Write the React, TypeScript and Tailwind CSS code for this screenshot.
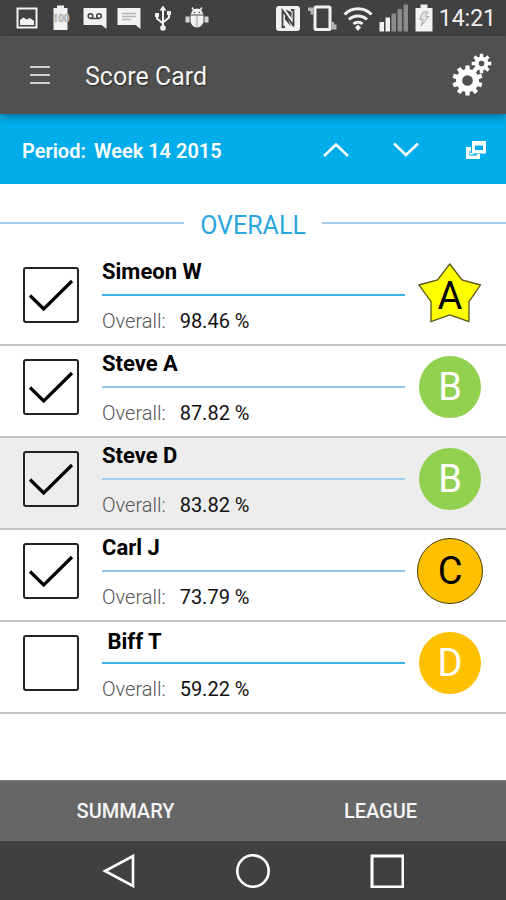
import { useState } from "react";
import type { ReactNode } from "react";

type Person = {
  name: string;
  score: string;
  grade: string;
  checked: boolean;
  rowClass: string;
  lineClass: string;
};

const people: Person[] = [
  {
    name: "Simeon W",
    score: "98.46 %",
    grade: "A",
    checked: true,
    rowClass: "bg-white",
    lineClass: "bg-[#3bb0e6]",
  },
  {
    name: "Steve A",
    score: "87.82 %",
    grade: "B",
    checked: true,
    rowClass: "bg-white",
    lineClass: "bg-[#93c9f1]",
  },
  {
    name: "Steve D",
    score: "83.82 %",
    grade: "B",
    checked: true,
    rowClass: "bg-[#ededed]",
    lineClass: "bg-[#a5cdec]",
  },
  {
    name: "Carl J",
    score: "73.79 %",
    grade: "C",
    checked: true,
    rowClass: "bg-white",
    lineClass: "bg-[#8cc6f0]",
  },
  {
    name: " Biff T",
    score: "59.22 %",
    grade: "D",
    checked: false,
    rowClass: "bg-white",
    lineClass: "bg-[#3bb0e6]",
  },
];

function gearPath(cx: number, cy: number, outer: number, inner: number, hole: number, teeth: number) {
  const step = (Math.PI * 2) / teeth;
  const points: string[] = [];
  for (let i = 0; i < teeth; i++) {
    const a = i * step - Math.PI / 2;
    const corners = [
      [inner, -0.32],
      [outer, -0.22],
      [outer, 0.22],
      [inner, 0.32],
    ];
    corners.forEach(([r, t]) => {
      points.push(`${cx + r * Math.cos(a + t * step)} ${cy + r * Math.sin(a + t * step)}`);
    });
  }
  return `M${points.join("L")}Z M${cx - hole} ${cy}a${hole} ${hole} 0 1 0 ${hole * 2} 0a${hole} ${hole} 0 1 0 ${-hole * 2} 0Z`;
}

function StatusIcon({ children }: { children: ReactNode }) {
  return (
    <svg width="24" height="28" viewBox="0 0 24 28" fill="#f2f2f2">
      {children}
    </svg>
  );
}

function StatusBar() {
  return (
    <div className="flex h-9 items-center justify-between bg-[#414141] pr-2.5 pl-[15px]">
      <div className="flex gap-2.5">
        <StatusIcon>
          <path d="M2.500 4.500h19v19h-19z" fill="none" stroke="#f2f2f2" strokeWidth="2" />
          <path d="M5 21v-5l3.500-2.500 3 2 3.500-1.500 4 3v4z" />
        </StatusIcon>
        <StatusIcon>
          <path d="M8 1.500h7v2.500h3.500v22h-14v-22h3.500z" />
          <text
            x="12"
            y="18"
            textAnchor="middle"
            fontSize="10"
            fontWeight="700"
            fontFamily="Roboto, sans-serif"
            fill="#c8c8c8"
            stroke="#a8a8a8"
            strokeWidth="0.500"
          >
            100
          </text>
        </StatusIcon>
        <StatusIcon>
          <path d="M0.500 4h23v21l-5-4h-18z" />
          <g fill="none" stroke="#414141" strokeWidth="1.500">
            <circle cx="7.500" cy="12" r="2.300" />
            <circle cx="16" cy="12" r="2.300" />
            <path d="M7.500 14.500h8.500" />
          </g>
        </StatusIcon>
        <StatusIcon>
          <path d="M0.500 4h23v21l-5-4h-18z" />
          <path d="M5 9.500h14M5 12.500h14M5 15.500h9" stroke="#b5b5b5" strokeWidth="1.500" />
        </StatusIcon>
        <StatusIcon>
          <path d="M12 1.500l3.500 5h-7zM4 9h4v4H4zM16 7h4v4h-4z" />
          <circle cx="12" cy="24" r="2.800" />
          <path
            d="M12 5v18M6 12v2.500l6 5M18 10v3.500l-6 5"
            fill="none"
            stroke="#f2f2f2"
            strokeWidth="2"
          />
        </StatusIcon>
        <StatusIcon>
          <path d="M6 10.500a6 6 0 0 1 12 0zM5.500 11.500h13v5.500a6.500 6.500 0 0 1-13 0z" />
          <path d="M0.500 12.500h4v6h-4zM19.500 12.500h4v6h-4z" fill="#d5d5d5" />
          <path d="M7 3.500l2 3M17 3.500l-2 3" stroke="#f2f2f2" strokeWidth="1.500" />
          <path d="M5 11h14M12 12v11" stroke="#999" />
          <circle cx="9.500" cy="8.500" r="0.800" fill="#414141" />
          <circle cx="14.500" cy="8.500" r="0.800" fill="#414141" />
        </StatusIcon>
      </div>

      <div className="flex items-center gap-1.5">
        <svg width="26" height="28" viewBox="0 0 26 28">
          <rect x="1" y="2" width="24" height="25" rx="3" fill="#f2f2f2" />
          <path
            d="M10 23H7.500V6.500L19 22.500M16 6h2.500v15"
            fill="none"
            stroke="#414141"
            strokeWidth="1.800"
          />
          <path d="M10 8v7.500l6 7z" fill="#414141" />
          <path d="M10.500 5.500l6 8.500V8z" fill="#414141" />
        </svg>
        <svg width="30" height="28" viewBox="0 0 30 28" fill="none" stroke="#f2f2f2">
          <rect x="8" y="3" width="15" height="22.500" rx="1" strokeWidth="3" />
          <path d="M1 3.500h5.500v7h-3V7H1zM24.500 18h2.500v2.500h2.500v5h-5z" fill="#b5b5b5" stroke="none" />
        </svg>
        <svg width="30" height="28" viewBox="0 0 30 28" fill="none" stroke="#f2f2f2">
          <path
            d="M1.500 10.500a19 19 0 0 1 27 0M6 15.500a13 13 0 0 1 18 0M10.500 20a6.500 6.500 0 0 1 9 0"
            strokeWidth="3"
          />
          <path d="M15 20.500l3 3-3 3.500-3-3.500z" fill="#f2f2f2" stroke="none" />
        </svg>
        <svg width="30" height="28" viewBox="0 0 30 28" fill="#8b8b8b">
          <path d="M0.500 18h4.500v9.500H0.500zM6.500 13.500h4.500v14H6.500z" fill="#f2f2f2" />
          <path d="M12.500 9.500h4.500v18h-4.500zM18.500 5h4.500v22.500h-4.500zM24.500 0.500h4.500v27h-4.500z" />
        </svg>
        <svg width="18" height="28" viewBox="0 0 18 28">
          <path d="M5.500 0.500h7v3.500h5v23.500H0.500V4h5z" fill="#f2f2f2" />
          <path
            d="M8 8h5l-2.500 4.500h3.500L6 22l2-6.500H4.500z"
            fill="#e2e2e2"
            stroke="#aaa"
            strokeWidth="1"
          />
        </svg>
        <span className="pt-0.5 text-[23px] leading-7 text-[#f0f0f0]">14:21</span>
      </div>
    </div>
  );
}

function Header() {
  return (
    <header className="relative z-10 flex h-[78px] items-center bg-[#505050] pr-3.5 pl-[30px] shadow-[0_3px_8px_rgba(0,0,0,0.35)]">
      <button aria-label="Menu" className="mr-[35px]">
        <svg width="20" height="20" viewBox="0 0 20 20" stroke="#cfcfcf" strokeWidth="2">
          <path d="M0 2h20M0 10h20M0 18h20" />
        </svg>
      </button>
      <h1 className="flex-1 pt-1 text-[25px] leading-8 text-[#f5f5f5] [text-shadow:1px_1px_1px_rgba(0,0,0,0.5)]">
        Score Card
      </h1>
      <button aria-label="Settings">
        <svg width="40" height="44" viewBox="0 0 40 44" fill="#fff" fillRule="evenodd">
          <path d={gearPath(15.5, 27.5, 15.2, 11.5, 5.3, 10)} />
          <path d={gearPath(29.5, 10.5, 10, 7, 2.8, 8)} />
        </svg>
      </button>
    </header>
  );
}

function PeriodBar() {
  return (
    <div className="flex h-[70px] items-center bg-[#00adea] pr-5 pl-[22px] text-white">
      <p className="flex flex-1 gap-2 pt-1 text-xl leading-7 font-semibold">
        <span>Period:</span>
        <span>Week 14 2015</span>
      </p>
      <button aria-label="Previous week" className="mr-11">
        <svg width="26" height="16" viewBox="0 0 26 16" fill="none" stroke="#fff" strokeWidth="2.500">
          <path d="M1 15L13 3.500 25 15" />
        </svg>
      </button>
      <button aria-label="Next week" className="mr-[47px]">
        <svg width="26" height="16" viewBox="0 0 26 16" fill="none" stroke="#fff" strokeWidth="2.500">
          <path d="M1 2.500L13 14 25 2.500" />
        </svg>
      </button>
      <button aria-label="Choose period">
        <svg width="20" height="20" viewBox="0 0 20 20" fillRule="evenodd" fill="#fff">
          <path d="M6 2h14v12.500H6zM9 6.500v4.500h8V6.500z" />
          <path d="M0 8h5v4H3v4.500h8v-1.500h3v5H0z" />
          <path d="M4.500 12v2h3v1.500h-4V12z" />
        </svg>
      </button>
    </div>
  );
}

function Badge({ grade }: { grade: string }) {
  if (grade === "A") {
    return (
      <div className="relative flex h-[66px] w-[66px] items-center justify-center">
        <svg className="absolute inset-0" width="66" height="66" viewBox="0 0 66 66">
          <path
            d="M32.700 2L45 18 63.500 23 52 39.700V59.700L32.700 53 14 59.700V39.700L2 23 20.500 18z"
            fill="#ffff00"
            stroke="#55551a"
            strokeWidth="1.300"
          />
        </svg>
        <span className="relative pt-0.5 text-[38px] leading-none text-black">A</span>
      </div>
    );
  }
  if (grade === "C") {
    return (
      <div className="flex h-[66px] w-[66px] items-center justify-center rounded-full border border-[#4a3c10] bg-[#ffc000] text-[38px] leading-none text-black">
        C
      </div>
    );
  }
  return (
    <div
      className={`m-[2px] flex h-[62px] w-[62px] items-center justify-center rounded-full text-[38px] leading-none text-white ${
        grade === "B" ? "bg-[#92d050]" : "bg-[#ffc000]"
      }`}
    >
      {grade}
    </div>
  );
}

function PersonRow({ person }: { person: Person }) {
  const [checked, setChecked] = useState(person.checked);

  return (
    <li className={`flex h-[92px] items-center border-b-2 border-[#c4c4c4] px-[23px] pb-2 ${person.rowClass}`}>
      <div className="relative h-14 w-14">
        <input
          type="checkbox"
          aria-label={person.name.trim()}
          checked={checked}
          onChange={() => setChecked(!checked)}
          className="block h-14 w-14 appearance-none rounded-[3px] border-2 border-[#222]"
        />
        {checked && (
          <svg
            className="pointer-events-none absolute inset-0"
            width="56"
            height="56"
            viewBox="0 0 56 56"
            fill="none"
            stroke="#000"
            strokeWidth="3.200"
          >
            <path d="M7 28.500L20.700 42 49 14" />
          </svg>
        )}
      </div>

      <div className="mr-3 ml-[23px] flex h-[82px] flex-1 flex-col">
        <div className={`h-10 ${person.name.startsWith(" ") ? "pt-1.5" : "pt-1"}`}>
          <h3 className="text-[22px] leading-7 font-bold whitespace-pre text-black">{person.name}</h3>
        </div>
        <div className={`h-0.5 ${person.lineClass}`} />
        <p className="flex h-10 gap-3.5 pt-[11px] text-xl leading-7">
          <span className="font-light text-[#555]">Overall:</span>
          <span className="text-[#111]">{person.score}</span>
        </p>
      </div>

      <Badge grade={person.grade} />
    </li>
  );
}

function BottomNav() {
  return (
    <div className="flex h-[59px] items-center justify-center gap-[100px] bg-[#404040]">
      <button aria-label="Back">
        <svg width="34" height="34" viewBox="0 0 34 34" fill="none" stroke="#fff" strokeWidth="2.600">
          <path d="M31 2v30L3 17z" />
        </svg>
      </button>
      <button aria-label="Home">
        <svg width="34" height="34" viewBox="0 0 34 34" fill="none" stroke="#fff" strokeWidth="2.600">
          <circle cx="17" cy="17" r="15.700" />
        </svg>
      </button>
      <button aria-label="Recent apps">
        <svg width="34" height="34" viewBox="0 0 34 34" fill="none" stroke="#fff" strokeWidth="3">
          <path d="M2 2h31v31H2z" />
        </svg>
      </button>
    </div>
  );
}

function App() {
  return (
    <div className="flex min-h-screen flex-col bg-white font-['Roboto',sans-serif]">
      <StatusBar />
      <Header />
      <PeriodBar />

      <main className="flex-1">
        <div className="flex h-[70px] items-center gap-4 pt-3.5">
          <div className="flex-1 pb-1.5">
            <div className="h-0.5 bg-[#a3cbee]" />
          </div>
          <h2 className="text-[25px] leading-8 text-[#2aa6e0]">OVERALL</h2>
          <div className="flex-1 pb-1.5">
            <div className="h-0.5 bg-[#a3cbee]" />
          </div>
        </div>
        <ul>
          {people.map((person) => (
            <PersonRow key={person.name} person={person} />
          ))}
        </ul>
      </main>

      <div className="flex h-[61px] justify-center border-t border-[#7c7c7c] bg-[#666666] text-xl font-medium text-[#f5f5f5] [text-shadow:1px_1px_1px_rgba(0,0,0,0.4)]">
        <button className="flex-1">SUMMARY</button>
        <button className="flex-1 pl-1">LEAGUE</button>
      </div>
      <BottomNav />
    </div>
  );
}

export default App;
